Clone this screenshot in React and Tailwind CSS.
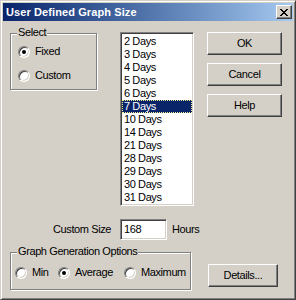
import React from "react";

const raised =
  "bg-[#d4d0c8] border border-t-white border-l-white border-r-[#404040] border-b-[#404040] shadow-[inset_-1px_-1px_#808080,inset_1px_1px_#d4d0c8]";
const sunken =
  "bg-white border border-t-[#808080] border-l-[#808080] border-r-white border-b-white shadow-[inset_1px_1px_#404040,inset_-1px_-1px_#d4d0c8]";
const etched = "border border-[#808080] shadow-[inset_1px_1px_#fff,1px_1px_#fff]";

const days = ["2", "3", "4", "5", "6", "7", "10", "14", "21", "28", "29", "30", "31"];

function Radio({ checked, label }) {
  return (
    <div className="flex items-center h-[13px]">
      <div className="w-3 h-3 shrink-0 rounded-full bg-white border border-t-[#808080] border-l-[#808080] border-r-white border-b-white shadow-[inset_1px_1px_#404040,inset_-1px_-1px_#d4d0c8] flex items-center justify-center">
        {checked && <div className="w-1 h-1 rounded-full bg-black" />}
      </div>
      <span className="ml-[5px] leading-[13px]">{label}</span>
    </div>
  );
}

function Button({ children, className = "" }) {
  return (
    <div className={`${raised} flex items-center justify-center h-[23px] ${className}`}>
      {children}
    </div>
  );
}

function GroupLabel({ children }) {
  return (
    <span className="absolute -top-[8px] left-[6px] px-[1px] bg-[#d4d0c8] leading-[13px]">
      {children}
    </span>
  );
}

export default function App() {
  return (
    <div
      className="w-[296px] h-[300px] bg-[#d4d0c8] border border-t-[#d4d0c8] border-l-[#d4d0c8] border-r-[#404040] border-b-[#404040] shadow-[inset_1px_1px_#fff,inset_-1px_-1px_#808080] p-[2px] flex flex-col text-[11px] text-black tracking-[-0.4px]"
      style={{ fontFamily: '"Liberation Sans", Arial, sans-serif' }}
    >
      {/* title bar */}
      <div className="h-[18px] shrink-0 flex items-center justify-between bg-linear-to-r from-[#0a246a] to-[#a6caf0] pl-[3px] pr-[1px]">
        <span className="text-white font-bold tracking-[0.1px] leading-[14px]">User Defined Graph Size</span>
        <div className={`${raised} w-[16px] h-[14px] flex items-center justify-center`}>
          <svg width="8" height="7" viewBox="0 0 8 7" shapeRendering="crispEdges">
            <path
              d="M0 0h2v1H0zM6 0h2v1H6zM1 1h2v1H1zM5 1h2v1H5zM2 2h4v1H2zM3 3h2v1H3zM2 4h4v1H2zM1 5h2v1H1zM5 5h2v1H5zM0 6h2v1H0zM6 6h2v1H6z"
              fill="#000"
            />
          </svg>
        </div>
      </div>

      {/* client */}
      <div className="flex flex-col pl-[7px] pt-[11px]">
        <div className="flex items-start">
          <div className={`relative mt-[1px] w-[87px] h-[57px] ${etched}`}>
            <GroupLabel>Select</GroupLabel>
            <div className="flex flex-col pl-[7px] pt-[11px] gap-[11px]">
              <Radio checked label="Fixed" />
              <Radio label="Custom" />
            </div>
          </div>

          <div className={`ml-[23px] w-[74px] h-[174px] ${sunken} pt-[2px] px-[1px]`}>
            {days.map((d) => (
              <div
                key={d}
                className={`h-[13px] leading-[13px] pl-[2px] ${
                  d === "7"
                    ? "bg-[#0a246a] text-white outline-1 outline-dotted outline-[#f4f08a] -outline-offset-1"
                    : ""
                }`}
              >
                {d} Days
              </div>
            ))}
          </div>

          <div className="ml-[13px] flex flex-col gap-[8px]">
            <Button className="w-[75px]">OK</Button>
            <Button className="w-[75px]">Cancel</Button>
            <Button className="w-[75px]">Help</Button>
          </div>
        </div>

        <div className="flex items-center mt-[13px] h-[21px]">
          <span className="w-[101px] text-right">Custom Size</span>
          <div className={`ml-[9px] w-[47px] h-[21px] ${sunken} flex items-center pl-[3px]`}>168</div>
          <span className="ml-[5px]">Hours</span>
        </div>

        <div className="flex items-start mt-[12px]">
          <div className={`relative w-[181px] h-[38px] ${etched}`}>
            <GroupLabel>Graph Generation Options</GroupLabel>
            <div className="flex pl-[4px] pt-[13px]">
              <div className="w-[43px]">
                <Radio label="Min" />
              </div>
              <div className="w-[66px]">
                <Radio checked label="Average" />
              </div>
              <Radio label="Maximum" />
            </div>
          </div>
          <Button className="ml-[17px] mt-[12px] w-[70px]">Details...</Button>
        </div>
      </div>
    </div>
  );
}
